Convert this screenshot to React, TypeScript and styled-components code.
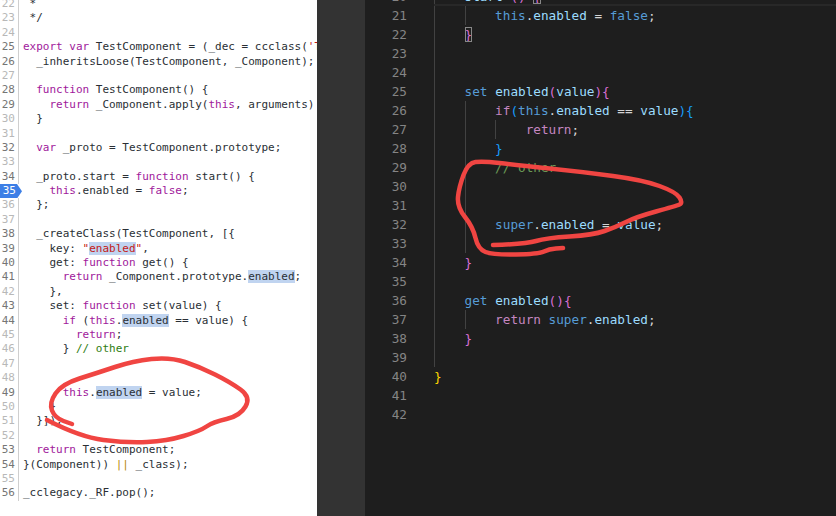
import React from 'react';
import styled, { createGlobalStyle } from 'styled-components';

const GlobalStyle = createGlobalStyle`
  html, body {
    margin: 0;
    padding: 0;
    background: #1e1e1e;
  }
`;

const Page = styled.div`
  position: relative;
  display: flex;
  width: 836px;
  height: 516px;
  overflow: hidden;
`;

/* left pane: browser devtools source view */
const LightPane = styled.div`
  width: 317px;
  flex: none;
  height: 100%;
  overflow: hidden;
  background: #fff;
  font-family: 'DejaVu Sans Mono', monospace;
  font-size: 11px;
`;

const LightList = styled.div`
  margin-top: -3px;
`;

const LightRow = styled.div`
  display: flex;
  height: 14.4px;
  line-height: 14.4px;
  white-space: pre;
`;

const LightGutter = styled.div<{ $active?: boolean; $strong?: boolean }>`
  flex: none;
  box-sizing: border-box;
  width: 19px;
  padding-right: 3px;
  text-align: right;
  border-right: 1px solid #cfcfcf;
  color: ${(p) => (p.$strong ? '#757575' : '#b8b8b8')};
  ${(p) =>
    p.$active &&
    `
    width: 22px;
    margin-right: -3px;
    padding-right: 6px;
    border-right: none;
    color: #fff;
    background: #3d7fe6;
    clip-path: polygon(0 0, 17px 0, 100% 50%, 17px 100%, 0 100%);
    position: relative;
    z-index: 1;
  `}
`;

const LightCode = styled.div`
  padding-left: 4px;
  color: #2a2f35;
`;

const lightColors: Record<string, string> = {
  kw: '#a0189b',
  str: '#c41a16',
  com: '#2f7d12',
  pipe: '#b5870a',
};

const LightToken = styled.span<{ $kind?: string; $mark?: boolean }>`
  color: ${(p) => (p.$kind ? lightColors[p.$kind] : 'inherit')};
  background: ${(p) => (p.$mark ? '#c0d4f0' : 'transparent')};
`;

/* right pane: VS Code editor */
const ActivityBar = styled.div`
  width: 48px;
  flex: none;
  height: 100%;
  background: #333333;
`;

const DarkPane = styled.div`
  flex: 1;
  height: 100%;
  overflow: hidden;
  background: #1e1e1e;
  font-family: 'DejaVu Sans Mono', monospace;
  font-size: 12.7px;
`;

const DarkList = styled.div`
  margin-top: -13px;
`;

const DarkRow = styled.div`
  display: flex;
  height: 19px;
  line-height: 19px;
  white-space: pre;
`;

const DarkGutter = styled.div`
  flex: none;
  width: 42px;
  margin-right: 27px;
  text-align: right;
  color: #858585;
`;

const DarkCode = styled.div<{ $guides: number; $current?: boolean }>`
  flex: 1;
  color: #d4d4d4;
  background-repeat: no-repeat;
  background-image: ${(p) =>
    Array(p.$guides).fill('linear-gradient(#424242, #424242)').join(', ') || 'none'};
  background-size: 1px 100%;
  background-position: ${(p) =>
    Array.from({ length: p.$guides }, (_, i) => `${i * 30.6}px 0`).join(', ') || '0 0'};
  ${(p) => p.$current && 'border-bottom: 2px solid #282828; box-sizing: border-box;'}
`;

const darkColors: Record<string, string> = {
  kw: '#569cd6',
  ctl: '#c586c0',
  mem: '#9cdcfe',
  com: '#6a9955',
  pink: '#da70d6',
  blue: '#179fff',
  gold: '#ffd700',
};

const DarkToken = styled.span<{ $kind?: string; $box?: boolean }>`
  color: ${(p) => (p.$kind ? darkColors[p.$kind] : 'inherit')};
  ${(p) => p.$box && 'outline: 1px solid #888; outline-offset: -1px;'}
`;

const Scribble = styled.svg`
  position: absolute;
  left: 0;
  top: 0;
  pointer-events: none;
`;

const InkPath = styled.path`
  fill: none;
  stroke: #f04542;
  stroke-width: 4.5;
  stroke-linecap: round;
  stroke-linejoin: round;
`;

type Tok = [string, string?, boolean?];

const K = (s: string): Tok => [s, 'kw'];
const T = (s: string): Tok => [s];
const M = (s: string): Tok => [s, undefined, true];

const lightLines: { n: number; strong?: boolean; active?: boolean; toks: Tok[] }[] = [
  { n: 22, toks: [T(' *')] },
  { n: 23, toks: [T(' */')] },
  { n: 24, toks: [] },
  { n: 25, strong: true, toks: [K('export var'), T(' TestComponent = (_dec = ccclass('), ["'T", 'str']] },
  { n: 26, strong: true, toks: [T('  _inheritsLoose(TestComponent, _Component);')] },
  { n: 27, toks: [] },
  { n: 28, strong: true, toks: [T('  '), K('function'), T(' TestComponent() {')] },
  { n: 29, strong: true, toks: [T('    '), K('return'), T(' _Component.apply('), K('this'), T(', arguments) || '), K('this'), T(';')] },
  { n: 30, toks: [T('  }')] },
  { n: 31, toks: [] },
  { n: 32, strong: true, toks: [T('  '), K('var'), T(' _proto = TestComponent.prototype;')] },
  { n: 33, toks: [] },
  { n: 34, strong: true, toks: [T('  _proto.start = '), K('function'), T(' start() {')] },
  { n: 35, active: true, toks: [T('    '), K('this'), T('.enabled = '), ['false', 'kw'], T(';')] },
  { n: 36, toks: [T('  };')] },
  { n: 37, toks: [] },
  { n: 38, strong: true, toks: [T('  _createClass(TestComponent, [{')] },
  { n: 39, strong: true, toks: [T('    key: '), ['"', 'str'], ['enabled', 'str', true], ['"', 'str'], T(',')] },
  { n: 40, strong: true, toks: [T('    get: '), K('function'), T(' get() {')] },
  { n: 41, strong: true, toks: [T('      '), K('return'), T(' _Component.prototype.'), M('enabled'), T(';')] },
  { n: 42, toks: [T('    },')] },
  { n: 43, strong: true, toks: [T('    set: '), K('function'), T(' set(value) {')] },
  { n: 44, strong: true, toks: [T('      '), K('if'), T(' ('), K('this'), T('.'), M('enabled'), T(' == value) {')] },
  { n: 45, toks: [T('        '), K('return'), T(';')] },
  { n: 46, toks: [T('      } '), ['// other', 'com']] },
  { n: 47, toks: [] },
  { n: 48, toks: [] },
  { n: 49, strong: true, toks: [T('      '), K('this'), T('.'), M('enabled'), T(' = value;')] },
  { n: 50, toks: [T('    }')] },
  { n: 51, toks: [T('  }]);')] },
  { n: 52, toks: [] },
  { n: 53, strong: true, toks: [T('  '), K('return'), T(' TestComponent;')] },
  { n: 54, strong: true, toks: [T('}(Component)) '), ['||', 'pipe'], T(' _class);')] },
  { n: 55, toks: [] },
  { n: 56, strong: true, toks: [T('_cclegacy._RF.pop();')] },
];

type DTok = [string, string?, boolean?];
const Mem = (s: string): DTok => [s, 'mem'];
const Kw = (s: string): DTok => [s, 'kw'];
const Pk = (s: string): DTok => [s, 'pink'];
const Bl = (s: string): DTok => [s, 'blue'];
const Pl = (s: string): DTok => [s];

const darkLines: { n: number; guides: number; current?: boolean; toks: DTok[] }[] = [
  { n: 20, guides: 1, current: true, toks: [Pl('    '), Mem('start'), Pl(' '), Pk('()'), Pl(' '), ['{', 'pink', true]] },
  { n: 21, guides: 2, toks: [Pl('        '), Kw('this'), Pl('.'), Mem('enabled'), Pl(' = '), Kw('false'), Pl(';')] },
  { n: 22, guides: 1, toks: [Pl('    '), ['}', 'pink', true]] },
  { n: 23, guides: 1, toks: [] },
  { n: 24, guides: 1, toks: [] },
  { n: 25, guides: 1, toks: [Pl('    '), Kw('set'), Pl(' '), Mem('enabled'), Pk('('), Mem('value'), Pk('){')] },
  { n: 26, guides: 2, toks: [Pl('        '), ['if', 'ctl'], Bl('('), Kw('this'), Pl('.'), Mem('enabled'), Pl(' == '), Mem('value'), Bl('){')] },
  { n: 27, guides: 3, toks: [Pl('            '), ['return', 'ctl'], Pl(';')] },
  { n: 28, guides: 2, toks: [Pl('        '), Bl('}')] },
  { n: 29, guides: 2, toks: [Pl('        '), ['// other', 'com']] },
  { n: 30, guides: 2, toks: [] },
  { n: 31, guides: 2, toks: [] },
  { n: 32, guides: 2, toks: [Pl('        '), Kw('super'), Pl('.'), Mem('enabled'), Pl(' = '), Mem('value'), Pl(';')] },
  { n: 33, guides: 2, toks: [] },
  { n: 34, guides: 1, toks: [Pl('    '), Pk('}')] },
  { n: 35, guides: 1, toks: [] },
  { n: 36, guides: 1, toks: [Pl('    '), Kw('get'), Pl(' '), Mem('enabled'), Pk('(){')] },
  { n: 37, guides: 2, toks: [Pl('        '), ['return', 'ctl'], Pl(' '), Kw('super'), Pl('.'), Mem('enabled'), Pl(';')] },
  { n: 38, guides: 1, toks: [Pl('    '), Pk('}')] },
  { n: 39, guides: 1, toks: [] },
  { n: 40, guides: 0, toks: [['}', 'gold']] },
  { n: 41, guides: 0, toks: [] },
  { n: 42, guides: 0, toks: [] },
];

// hand drawn circles, in page coordinates
const leftInk: number[][] = [
  [47, 420], [80, 437], [127, 443], [167, 441], [200, 431], [213, 422], [240, 416], [251, 397],
  [230, 382], [200, 367], [170, 357], [133, 361], [97, 373], [62, 384], [49, 403], [55, 418], [72, 424],
];

const rightInk: number[][] = [
  [493, 245], [526, 244], [546, 238], [593, 235], [616, 227], [636, 217], [676, 206], [683, 203],
  [676, 192], [643, 180], [583, 172], [516, 165], [483, 161], [468, 163], [459, 187], [457, 207],
  [473, 227], [478, 249], [493, 255], [539, 254], [549, 249], [563, 248],
];

function smooth(points: number[][]) {
  let d = `M${points[0][0]} ${points[0][1]}`;
  for (let i = 1; i < points.length - 1; i++) {
    const mx = (points[i][0] + points[i + 1][0]) / 2;
    const my = (points[i][1] + points[i + 1][1]) / 2;
    d += ` Q${points[i][0]} ${points[i][1]} ${mx} ${my}`;
  }
  const last = points[points.length - 1];
  return `${d} L${last[0]} ${last[1]}`;
}

export default function App() {
  return (
    <Page>
      <GlobalStyle />
      <LightPane>
        <LightList>
          {lightLines.map((line) => (
            <LightRow key={line.n}>
              <LightGutter $active={line.active} $strong={line.strong}>
                {line.n}
              </LightGutter>
              <LightCode>
                {line.toks.map(([text, kind, mark], i) => (
                  <LightToken key={i} $kind={kind} $mark={mark}>
                    {text}
                  </LightToken>
                ))}
              </LightCode>
            </LightRow>
          ))}
        </LightList>
      </LightPane>
      <ActivityBar />
      <DarkPane>
        <DarkList>
          {darkLines.map((line) => (
            <DarkRow key={line.n}>
              <DarkGutter>{line.n}</DarkGutter>
              <DarkCode $guides={line.guides} $current={line.current}>
                {line.toks.map(([text, kind, box], i) => (
                  <DarkToken key={i} $kind={kind} $box={box}>
                    {text}
                  </DarkToken>
                ))}
              </DarkCode>
            </DarkRow>
          ))}
        </DarkList>
      </DarkPane>
      <Scribble width={836} height={516} viewBox="0 0 836 516">
        <InkPath d={smooth(leftInk)} />
        <InkPath d={smooth(rightInk)} />
      </Scribble>
    </Page>
  );
}
